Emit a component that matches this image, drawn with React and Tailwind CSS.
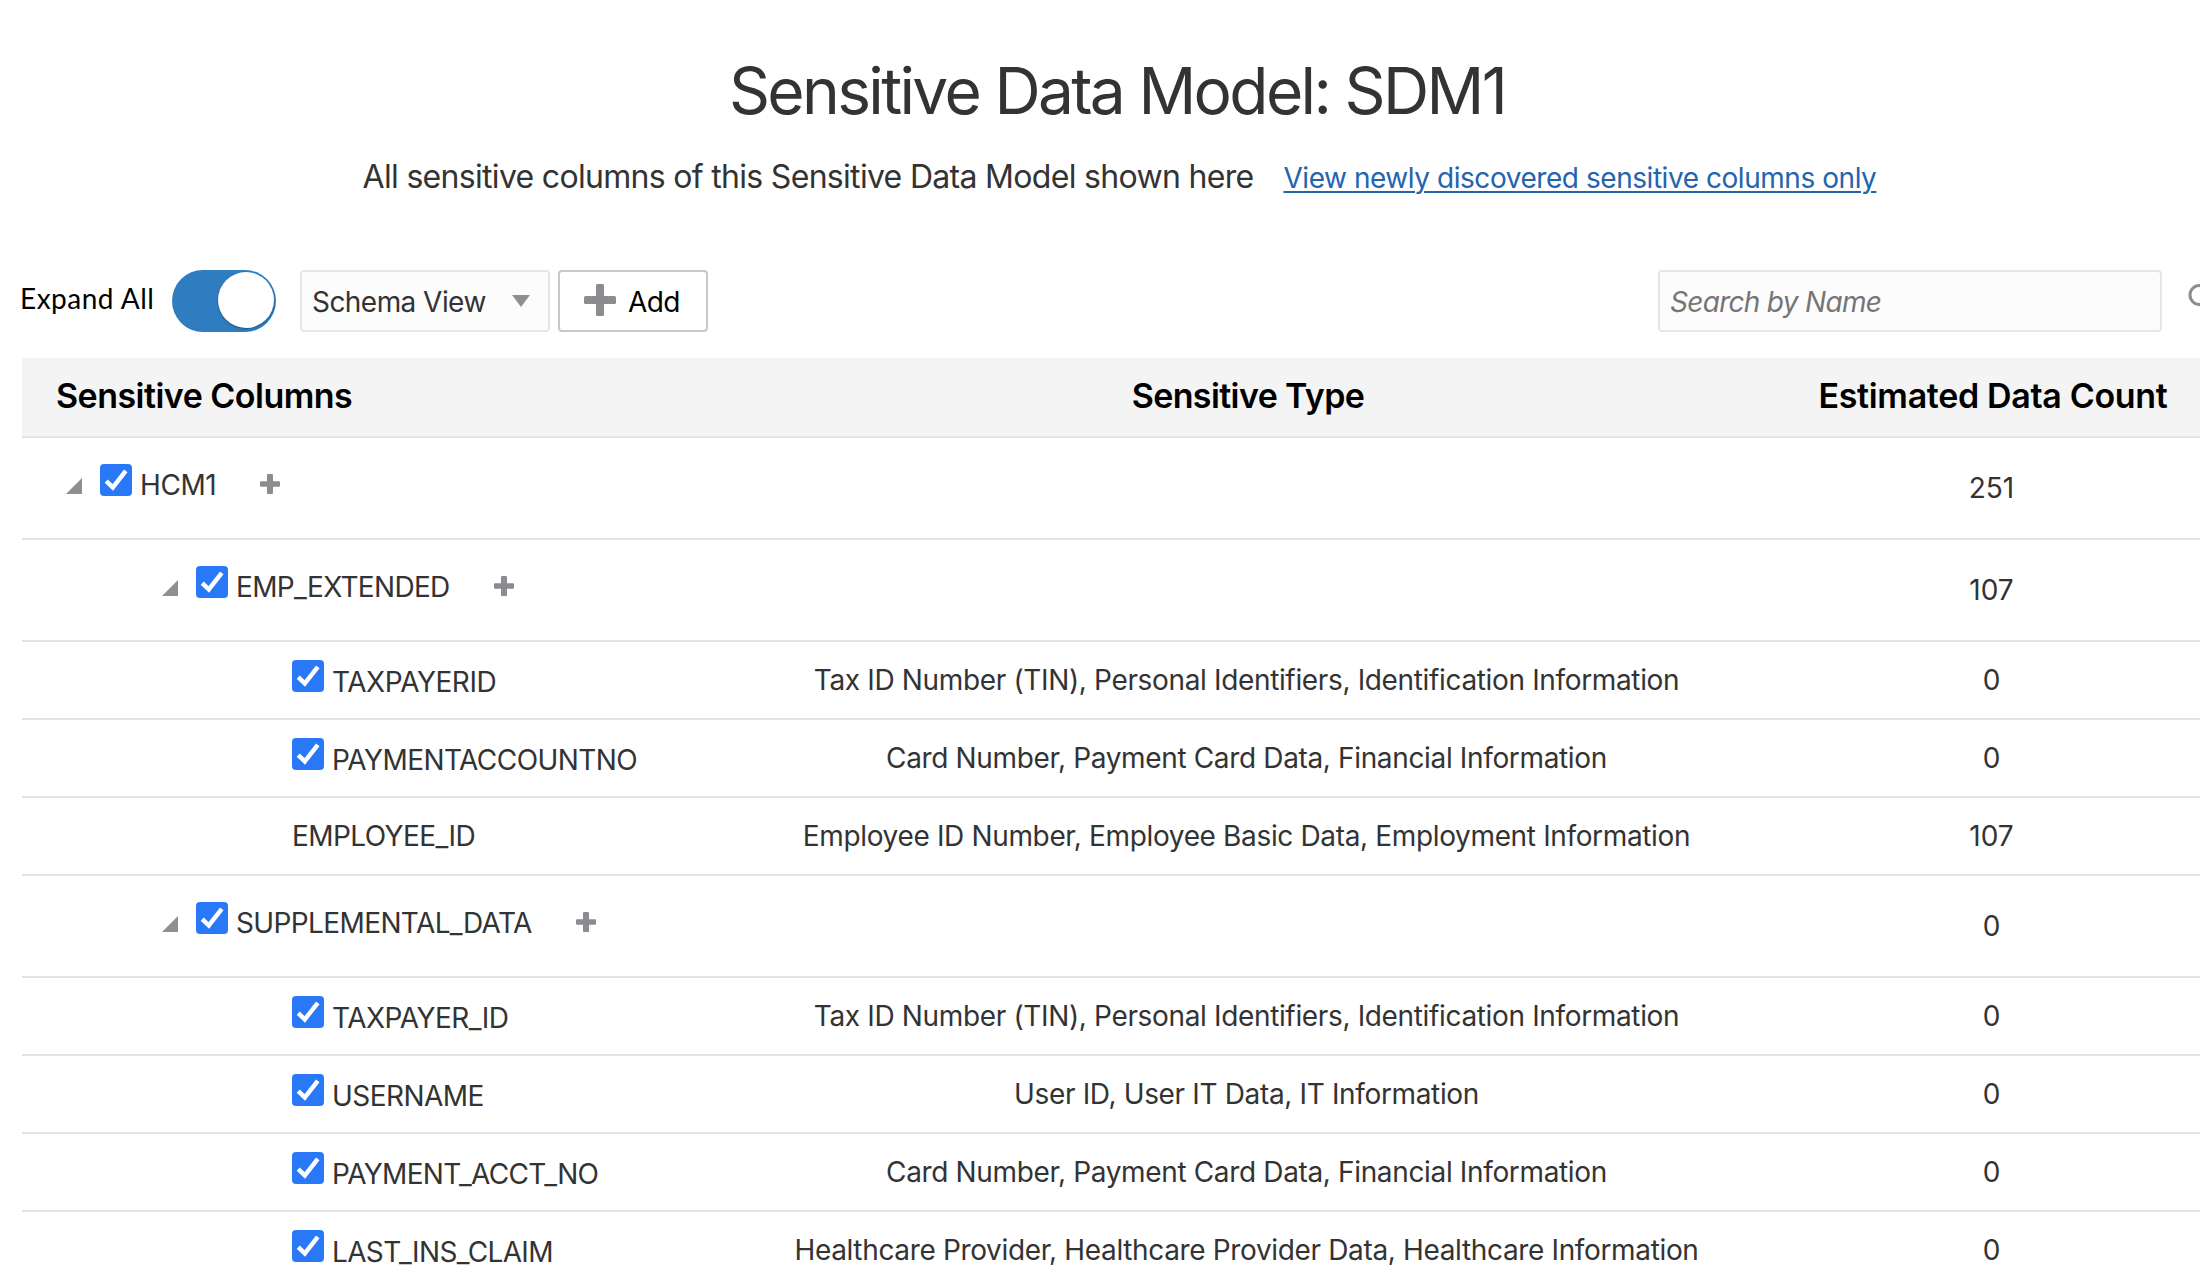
const rows = [
  { level: 0, group: true, label: "HCM1", track: "tracking-[-0.4px]", type: "", count: "251" },
  { level: 1, group: true, label: "EMP_EXTENDED", track: "tracking-[-0.68px]", type: "", count: "107" },
  { level: 2, label: "TAXPAYERID", track: "tracking-[-0.45px]", type: "Tax ID Number (TIN), Personal Identifiers, Identification Information", count: "0" },
  { level: 2, label: "PAYMENTACCOUNTNO", track: "tracking-[-0.56px]", type: "Card Number, Payment Card Data, Financial Information", count: "0" },
  { level: 2, plain: true, label: "EMPLOYEE_ID", track: "tracking-[-0.6px]", type: "Employee ID Number, Employee Basic Data, Employment Information", count: "107" },
  { level: 1, group: true, label: "SUPPLEMENTAL_DATA", track: "tracking-[-0.62px]", type: "", count: "0" },
  { level: 2, label: "TAXPAYER_ID", track: "tracking-[-0.55px]", type: "Tax ID Number (TIN), Personal Identifiers, Identification Information", count: "0" },
  { level: 2, label: "USERNAME", track: "tracking-[-0.55px]", type: "User ID, User IT Data, IT Information", count: "0" },
  { level: 2, label: "PAYMENT_ACCT_NO", track: "tracking-[-0.68px]", type: "Card Number, Payment Card Data, Financial Information", count: "0" },
  { level: 2, label: "LAST_INS_CLAIM", track: "tracking-[-0.65px]", type: "Healthcare Provider, Healthcare Provider Data, Healthcare Information", count: "0" },
];

const indent = ["pl-11", "pl-[140px]", "pl-[270px]"];
const columns = "grid grid-cols-[688px_1074px_416px]";

function Checkbox() {
  return (
    <svg viewBox="0 0 32 32" className="size-8 shrink-0">
      <rect width="32" height="32" rx="4" fill="#2878f8" />
      <path d="M6.2 17.2 12.8 23.4 25.8 6.8" fill="none" stroke="#fff" strokeWidth="4.4" />
    </svg>
  );
}

function SmallPlus() {
  return (
    <svg viewBox="0 0 20 20" className="size-5 shrink-0" fill="#8a8c90">
      <rect x="7" width="6" height="20" rx="1" />
      <rect y="7.3" width="20" height="5.4" rx="1" />
    </svg>
  );
}

function Row({ row }) {
  return (
    <div className={`${columns} border-b-2 border-[#e2e2e2] ${row.group ? "h-[102px]" : "h-[78px]"}`}>
      <div className={`flex items-start ${indent[row.level]} ${row.group ? "pt-[26px]" : "pt-[18px]"}`}>
        {row.group && (
          <svg viewBox="0 0 16 16" className="mt-3.5 mr-[18px] size-4 shrink-0">
            <path d="M16 0V16H0Z" fill="#8d8f91" />
          </svg>
        )}
        {!row.plain && <Checkbox />}
        <span className={`leading-10 whitespace-nowrap ${row.track} ${row.plain ? "" : row.group ? "ml-2 mt-px" : "ml-2 mt-0.5"}`}>
          {row.label}
        </span>
        {row.group && <span className="mt-2.5 ml-[44px]"><SmallPlus /></span>}
      </div>
      <div className="flex items-center justify-center pr-px tracking-[-0.35px] whitespace-nowrap">{row.type}</div>
      <div className="flex items-center justify-center pr-px">{row.count}</div>
    </div>
  );
}

export default function App() {
  return (
    <div className="h-[1286px] w-[2200px] overflow-hidden bg-white font-['Inter',sans-serif] text-[28px] text-[#333333]">
      <header className="flex h-[270px] flex-col items-center pt-[51px] pl-[38px]">
        <h1 className="pr-1 text-[64px] leading-[80px] font-normal tracking-[-2.65px] whitespace-nowrap">Sensitive Data Model: SDM1</h1>
        <div className="mt-[26px] flex items-start whitespace-nowrap">
          <span className="ml-px text-[32px] leading-[40px] tracking-[-0.69px]">All sensitive columns of this Sensitive Data Model shown here</span>
          <a className="mt-px ml-[30px] leading-[40px] tracking-[-0.45px] text-[#2464ae] underline decoration-2 underline-offset-[3px]">
            View newly discovered sensitive columns only
          </a>
        </div>
      </header>

      <div className="flex h-[88px] w-[2240px] items-start pl-5">
        <span className="mt-2 w-[152px] font-['Lato',sans-serif] leading-[40px] tracking-[0.5px] text-black">Expand All</span>
        <div className="flex h-[62px] w-[104px] justify-end rounded-full bg-[#307cc0] pt-0.5 pr-0.5">
          <div className="size-14 rounded-full bg-white shadow-[0_1px_2px_rgba(0,0,0,0.35)]" />
        </div>
        <div className="ml-6 flex h-[62px] w-[250px] items-center justify-between rounded border-2 border-[#e6e6e6] bg-[#fcfcfc] pr-[18px] pl-2.5">
          <span className="pt-0.5 tracking-[-0.55px]">Schema View</span>
          <svg viewBox="0 0 18 12" className="mb-px h-3 w-[18px]"><path d="M0 0H18L9 12Z" fill="#8d8f91" /></svg>
        </div>
        <button className="ml-2 flex h-[62px] w-[150px] items-center rounded border-2 border-[#c8c8c8] bg-white pl-6 text-black">
          <svg viewBox="0 0 32 32" className="mb-0.5 size-8" fill="#8a8c90">
            <rect x="12" width="8" height="32" rx="1.5" />
            <rect y="12" width="32" height="8" rx="1.5" />
          </svg>
          <span className="ml-3 pt-0.5 tracking-[-0.6px]">Add</span>
        </button>
        <div className="ml-auto flex h-[62px] w-[504px] items-center rounded border-2 border-[#e6e6e6] bg-[#fcfcfc] pt-0.5 pl-2.5 tracking-[-0.7px] text-[#757575] italic">
          Search by Name
        </div>
        <svg viewBox="0 0 32 32" className="mt-3.5 mr-5 ml-[26px] size-8 shrink-0" fill="none" stroke="#8d8d8d" strokeWidth="3">
          <circle cx="11.5" cy="11" r="9.5" />
          <path d="m18.5 18 10 10" />
        </svg>
      </div>

      <div className="ml-[22px]">
        <div className={`${columns} h-20 items-center border-b-2 border-[#e4e4e4] bg-[#f4f4f4] pb-[3px] text-[34px] font-semibold whitespace-nowrap text-black`}>
          <span className="pl-[34px] tracking-[-0.52px]">Sensitive Columns</span>
          <span className="pl-0.5 text-center tracking-[-0.6px]">Sensitive Type</span>
          <span className="pl-0.5 text-center tracking-[-0.33px]">Estimated Data Count</span>
        </div>
        {rows.map((row) => <Row key={row.label} row={row} />)}
      </div>
    </div>
  );
}
